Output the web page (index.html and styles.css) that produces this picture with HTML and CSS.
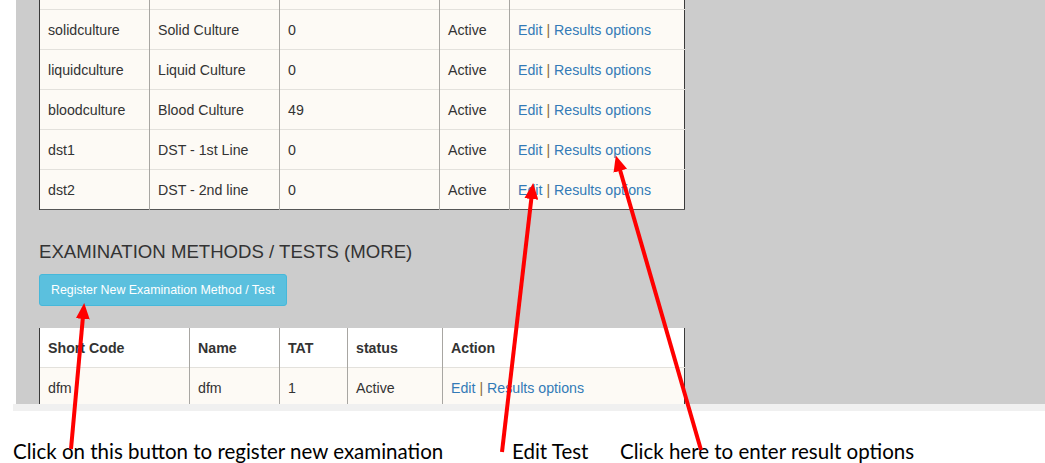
FILE: index.html
```html
<!DOCTYPE html>
<html>
<head>
<meta charset="utf-8">
<link rel="stylesheet" href="styles.css">
</head>
<body>
<div class="page">
  <div class="panel">
    <table class="grid grid-top">
      <colgroup><col class="c1"><col class="c2"><col class="c3"><col class="c4"><col class="c5"></colgroup>
      <tbody>
        <tr class="cut"><td></td><td></td><td></td><td></td><td></td></tr>
        <tr><td>solidculture</td><td>Solid Culture</td><td>0</td><td>Active</td><td><a href="#">Edit</a> <span class="sep">|</span> <a href="#">Results options</a></td></tr>
        <tr><td>liquidculture</td><td>Liquid Culture</td><td>0</td><td>Active</td><td><a href="#">Edit</a> <span class="sep">|</span> <a href="#">Results options</a></td></tr>
        <tr><td>bloodculture</td><td>Blood Culture</td><td>49</td><td>Active</td><td><a href="#">Edit</a> <span class="sep">|</span> <a href="#">Results options</a></td></tr>
        <tr><td>dst1</td><td>DST - 1st Line</td><td>0</td><td>Active</td><td><a href="#">Edit</a> <span class="sep">|</span> <a href="#">Results options</a></td></tr>
        <tr><td>dst2</td><td>DST - 2nd line</td><td>0</td><td>Active</td><td><a href="#">Edit</a> <span class="sep">|</span> <a href="#">Results options</a></td></tr>
      </tbody>
    </table>

    <h3 class="section-title">EXAMINATION METHODS / TESTS (MORE)</h3>
    <button class="btn-info">Register New Examination Method / Test</button>

    <table class="grid grid-bottom">
      <colgroup><col class="d1"><col class="d2"><col class="d3"><col class="d4"><col class="d5"></colgroup>
      <thead>
        <tr><th>Short Code</th><th>Name</th><th>TAT</th><th>status</th><th>Action</th></tr>
      </thead>
      <tbody>
        <tr><td>dfm</td><td>dfm</td><td>1</td><td>Active</td><td><a href="#">Edit</a> <span class="sep">|</span> <a href="#">Results options</a></td></tr>
      </tbody>
    </table>
  </div>
  <div class="strip"></div>
  <div class="notes">
    <span class="note note-1">Click on this button to register new examination</span>
    <span class="note note-2">Edit Test</span>
    <span class="note note-3">Click here to enter result options</span>
  </div>

  <svg class="arrows" width="1045" height="463" viewBox="0 0 1045 463">
    <defs>
      <marker id="head" markerUnits="userSpaceOnUse" markerWidth="16" markerHeight="14" refX="6" refY="7" orient="auto">
        <path d="M0,0 L16,7 L0,14 z" fill="#ff0000"/>
      </marker>
    </defs>
    <line x1="71" y1="449" x2="83.3" y2="313" stroke="#ff0000" stroke-width="4" marker-end="url(#head)"/>
    <line x1="502" y1="452" x2="532" y2="193" stroke="#ff0000" stroke-width="4" marker-end="url(#head)"/>
    <line x1="701" y1="450" x2="618.6" y2="165" stroke="#ff0000" stroke-width="4" marker-end="url(#head)"/>
  </svg>
</div>
</body>
</html>
```

FILE: styles.css
```css
* { box-sizing: border-box; }

html, body {
  margin: 0;
  padding: 0;
  background: #ffffff;
}

.page {
  position: relative;
  width: 1045px;
  height: 463px;
  overflow: hidden;
  font-family: "Liberation Sans", Arial, Helvetica, sans-serif;
  font-size: 14px;
  color: #333333;
}

.panel {
  margin-left: 16px;
  height: 404px;
  background: #cccccc;
  padding-left: 23px;
  overflow: hidden;
}

.grid {
  border-collapse: collapse;
  table-layout: fixed;
  width: 645px;
  background: #fdfaf5;
  border-left: 1px solid #3a3a3a;
  border-right: 1px solid #3a3a3a;
}

.grid td, .grid th {
  padding: 10px 8px 9px;
  line-height: 20px;
  font-size: 14.2px;
  text-align: left;
  border-top: 1px solid #e3e1dc;
  border-left: 1px solid #a8a6a2;
  white-space: nowrap;
  overflow: hidden;
}

.grid td:first-child, .grid th:first-child {
  border-left: 1px solid #3a3a3a;
}

.grid-top {
  border-bottom: 1px solid #555555;
}

.grid-top .cut td {
  height: 9px;
  padding: 0;
  border-top: none;
}

.c1 { width: 110px; }
.c2 { width: 130px; }
.c3 { width: 160px; }
.c4 { width: 70px; }
.c5 { width: 175px; }

.d1 { width: 150px; }
.d2 { width: 90px; }
.d3 { width: 68px; }
.d4 { width: 95px; }
.d5 { width: 242px; }

.grid a {
  color: #337ab7;
  text-decoration: none;
}

.sep {
  color: #8a6d3b;
}

.section-title {
  margin: 32px 0 0;
  font-size: 18.6px;
  line-height: 20px;
  font-weight: 500;
  color: #333333;
}

.btn-info {
  display: block;
  margin-top: 12px;
  height: 32px;
  padding: 0 11px;
  font-family: "Liberation Sans", Arial, Helvetica, sans-serif;
  font-size: 12.4px;
  color: #ffffff;
  background: #5bc0de;
  border: 1px solid #46b8da;
  border-radius: 3px;
}

.grid-bottom {
  margin-top: 22px;
}

.grid-bottom thead th {
  background: #ffffff;
  font-weight: bold;
  border-top: none;
}

.strip {
  margin-left: 13px;
  height: 7px;
  background: #f0f0f0;
}

.notes {
  display: flex;
  padding-top: 28px;
  font-family: Lato, "Open Sans", sans-serif;
  font-size: 20.5px;
  line-height: 24px;
  color: #000000;
}

.note { flex: none; white-space: nowrap; }
.note-1 { margin-left: 13px; width: 499px; }
.note-2 { width: 108px; }

.arrows {
  position: absolute;
  top: 0;
  left: 0;
}
```
